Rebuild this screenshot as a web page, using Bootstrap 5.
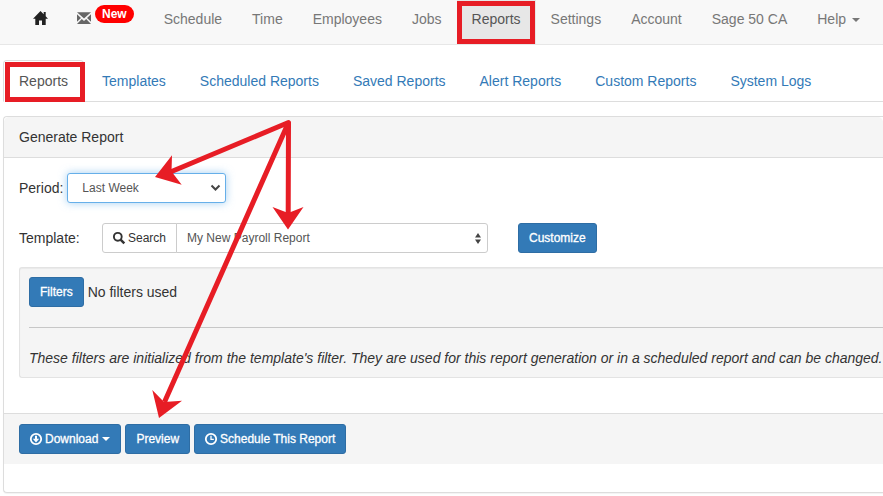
<!DOCTYPE html>
<html lang="en">
<head>
<meta charset="utf-8">
<meta name="viewport" content="width=device-width, initial-scale=1">
<title>Reports</title>
<link href="https://cdn.jsdelivr.net/npm/bootstrap@5.3.0/dist/css/bootstrap.min.css" rel="stylesheet">
<style>
  body { font-family: "Liberation Sans", Arial, sans-serif; font-size: 14px; line-height: 20px; color: #333; overflow-x: hidden; }
  .page { min-height: 100vh; }
  .topbar { background: #f8f8f8; border-bottom: 1px solid #e7e7e7; padding-left: 18px; }
  .topbar .nav-link { color: #777; padding: 9px 15px 15px; white-space: nowrap; position: relative; }
  .topbar .nav-link.active { color: #555; background: #e7e7e7; }
  .topbar .dropdown-toggle::after, .btn.dropdown-toggle::after { border-top-width: 4px; border-right-width: 4px; border-left-width: 4px; margin-left: 6px; vertical-align: 2px; }
  .btn.dropdown-toggle::after { margin-left: 4px; }
  .new-pill { background: #f00; font-size: 12px; line-height: 18px; padding: 0 7px; margin: -4px 0 6px 4px; height: 18px; }
  .subtabs { margin: 15px 0 14px 3px; border-color: #ddd; }
  .subtabs .nav-link { color: #337ab7; padding: 10px 15px; margin-right: 2px; border-radius: 4px 4px 0 0; white-space: nowrap; position: relative; }
  .subtabs .nav-link.active { color: #555; border-color: #ddd #ddd #fff; }
  .marked::before { content: ""; position: absolute; border: 5px solid #e71d25; inset: 1px 1px 0 0; }
  .subtabs .marked::before { inset: 1px -2px -1px 1px; }
  .panel-box { margin-left: 3px; border-color: #ddd; border-radius: 4px 0 0 4px; border-right: 0; padding-bottom: 28px; box-shadow: 0 1px 1px rgba(0,0,0,.05); }
  .panel-box .card-header { background: #f5f5f5; border-color: #ddd; padding: 10px 15px; }
  .panel-box .card-body { padding: 15px 0 35px 15px; }
  .panel-box .card-footer { background: #f5f5f5; border-color: #ddd; padding: 10px 15px; border-radius: 0; }
  .btn { font-size: 12px; line-height: 18px; padding: 5px 10px; border-radius: 3px; }
  .btn-primary { --bs-btn-bg: #337ab7; --bs-btn-border-color: #2e6da4; -webkit-text-stroke: .3px #fff; }
  .btn-search { border-color: #ccc; color: #333; background: #fff; }
  .btn-icon { margin-right: 3px; }
  .form-select { font-size: 12px; line-height: 18px; color: #555; border-color: #ccc; border-radius: 3px; padding: 5px 24px 5px 10px; }
  .period-select { width: 159px; padding-left: 14px; border-color: #66afe9; box-shadow: 0 0 8px rgba(102,175,233,.6); background-position: right 4px center; background-size: 11px 8px;
    background-image: url("data:image/svg+xml,%3csvg xmlns='http://www.w3.org/2000/svg' viewBox='0 0 11 8'%3e%3cpath d='M1.5 1.5l4 4 4-4' fill='none' stroke='%23444' stroke-width='2'/%3e%3c/svg%3e"); }
  .template-select { background-position: right 6px center; background-size: 6px 11px;
    background-image: url("data:image/svg+xml,%3csvg xmlns='http://www.w3.org/2000/svg' viewBox='0 0 6 11'%3e%3cpath d='M0 4.5L3 0l3 4.5zM0 6.5h6L3 11z' fill='%23444'/%3e%3c/svg%3e"); }
  .field-label { width: 83px; }
  .template-group { flex: 0 1 386px; margin-right: 30px; }
  .filter-box { background: #f5f5f5; border: 1px solid #e3e3e3; border-right: 0; border-radius: 3px 0 0 3px; padding: 9px 0 9px 9px; box-shadow: inset 0 1px 1px rgba(0,0,0,.05); margin-top: 14px; }
  .filter-box hr { margin: 20px 0; border-color: #999; opacity: .5; }
  .arrows { position: absolute; top: 0; left: 0; pointer-events: none; z-index: 5; }
  svg { flex: none; overflow: visible; }
</style>
</head>
<body>
<div class="page position-relative">
  <nav class="topbar" aria-label="Main">
    <ul class="nav flex-nowrap">
      <li class="nav-item"><a class="nav-link d-flex" href="#" aria-label="Home">
        <svg width="14" height="20" viewBox="0 0 14 20" fill="#222"><path d="M7.500 2L0 9.800H2.300V16H6V11.500H9V16H12.700V9.800H15L12.700 7.300V3H10.700V5.300Z"/></svg></a></li>
      <li class="nav-item"><a class="nav-link d-flex" href="#" aria-label="Messages, new">
        <svg width="14" height="20" viewBox="0 0 14 20" fill="#666"><path d="M0 3.300H14L7 9.600ZM0 5.300L4 9L0 12.800ZM14 5.300V12.800L10 9ZM4.800 10L7 12L9.200 10L14 15H0Z"/></svg>
        <span class="badge rounded-pill new-pill">New</span></a></li>
      <li class="nav-item"><a class="nav-link" href="#">Schedule</a></li>
      <li class="nav-item"><a class="nav-link" href="#">Time</a></li>
      <li class="nav-item"><a class="nav-link" href="#">Employees</a></li>
      <li class="nav-item"><a class="nav-link" href="#">Jobs</a></li>
      <li class="nav-item"><a class="nav-link active marked" href="#" aria-current="page">Reports</a></li>
      <li class="nav-item"><a class="nav-link" href="#">Settings</a></li>
      <li class="nav-item"><a class="nav-link" href="#">Account</a></li>
      <li class="nav-item"><a class="nav-link" href="#">Sage 50 CA</a></li>
      <li class="nav-item dropdown"><a class="nav-link dropdown-toggle" href="#" role="button">Help</a></li>
    </ul>
  </nav>

  <ul class="nav nav-tabs flex-nowrap subtabs">
    <li class="nav-item"><a class="nav-link active marked" href="#">Reports</a></li>
    <li class="nav-item"><a class="nav-link" href="#">Templates</a></li>
    <li class="nav-item"><a class="nav-link" href="#">Scheduled Reports</a></li>
    <li class="nav-item"><a class="nav-link" href="#">Saved Reports</a></li>
    <li class="nav-item"><a class="nav-link" href="#">Alert Reports</a></li>
    <li class="nav-item"><a class="nav-link" href="#">Custom Reports</a></li>
    <li class="nav-item"><a class="nav-link" href="#">System Logs</a></li>
  </ul>

  <main class="card panel-box">
    <div class="card-header">Generate Report</div>
    <div class="card-body">
      <div class="d-flex align-items-center gap-1 mb-3 pb-1">
        <label for="period">Period:</label>
        <select id="period" class="form-select period-select"><option>Last Week</option></select>
      </div>
      <div class="d-flex align-items-center">
        <label for="template" class="field-label">Template:</label>
        <div class="input-group flex-nowrap template-group">
          <button type="button" class="btn btn-search d-flex align-items-center">
            <svg class="btn-icon" width="12" height="12" viewBox="0 0 12 12" fill="none" stroke="#333"><circle cx="4.800" cy="4.800" r="3.900" stroke-width="1.900"/><path d="M7.600 7.600L11.300 11.300" stroke-width="2.500"/></svg>Search</button>
          <select id="template" class="form-select template-select"><option>My New Payroll Report</option></select>
        </div>
        <button type="button" class="btn btn-primary">Customize</button>
      </div>
      <div class="filter-box">
        <div class="d-flex align-items-center gap-1">
          <button type="button" class="btn btn-primary">Filters</button>
          <span>No filters used</span>
        </div>
        <hr>
        <em class="text-nowrap d-block">These filters are initialized from the template's filter. They are used for this report generation or in a scheduled report and can be changed.</em>
      </div>
    </div>
    <div class="card-footer d-flex gap-1">
      <button type="button" class="btn btn-primary dropdown-toggle d-flex align-items-center">
        <svg class="btn-icon" width="12" height="12" viewBox="0 0 12 12" fill="none" stroke="#fff"><circle cx="6" cy="6" r="5.200" stroke-width="1.800"/><path d="M5 2.800H7V5.800H9.200L6 9.400L2.800 5.800H5Z" fill="#fff" stroke="none"/></svg>Download</button>
      <button type="button" class="btn btn-primary">Preview</button>
      <button type="button" class="btn btn-primary d-flex align-items-center">
        <svg class="btn-icon" width="12" height="12" viewBox="0 0 12 12" fill="none" stroke="#fff"><circle cx="6" cy="6" r="5.200" stroke-width="1.800"/><path d="M6 2.800V6.300H8.800" stroke-width="1.300"/></svg>Schedule This Report</button>
    </div>
  </main>

  <svg class="arrows" width="883" height="496" viewBox="0 0 883 496" fill="#e71d25" aria-hidden="true">
    <path d="M168 173L288.500 122.500L288.200 214M288.500 122.500L164.500 402" fill="none" stroke="#e71d25" stroke-width="5" stroke-linejoin="round"/>
    <path d="M155 177L172 155.300L171.500 171.500L181.700 184.700Z"/>
    <path d="M288 229.500L272.500 207L288.200 213L303.500 207Z"/>
    <path d="M159 418L152.300 390L164 402L182 400.700Z"/>
  </svg>
</div>
<script src="https://cdn.jsdelivr.net/npm/bootstrap@5.3.0/dist/js/bootstrap.bundle.min.js"></script>
</body>
</html>
